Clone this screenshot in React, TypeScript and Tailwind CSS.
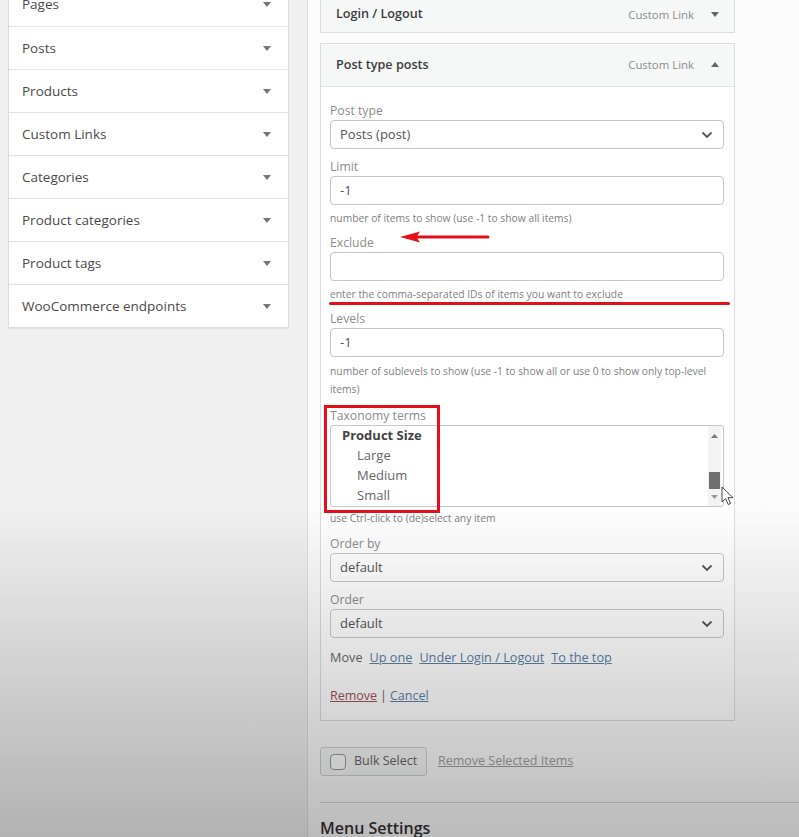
import React from "react";

const leftItems = [
  "Pages",
  "Posts",
  "Products",
  "Custom Links",
  "Categories",
  "Product categories",
  "Product tags",
  "WooCommerce endpoints",
];

function Tri({ up = false, color = "#777" }: { up?: boolean; color?: string }) {
  return (
    <svg width="8" height="5" viewBox="0 0 8 5">
      <path d={up ? "M0 5h8L4 0z" : "M0 0h8L4 5z"} fill={color} />
    </svg>
  );
}

function Chevron() {
  return (
    <svg width="12" height="8" viewBox="0 0 12 8">
      <path d="M1.5 1.5l4.5 4.5 4.5-4.5" stroke="#555" strokeWidth="1.8" fill="none" />
    </svg>
  );
}

function Label({ children, className = "" }: { children: React.ReactNode; className?: string }) {
  return <div className={`text-[12.2px] leading-[18px] text-[#8c8c8c] ${className}`}>{children}</div>;
}

function Help({ children, className = "" }: { children: React.ReactNode; className?: string }) {
  return <div className={`text-[10.3px] leading-[16px] text-[#808080] ${className}`}>{children}</div>;
}

function Select({ value }: { value: string }) {
  return (
    <div className="h-[29px] border border-[#c6c6c6] rounded-[4px] bg-white flex items-center justify-between pl-[9px] pr-[10px] text-[13px] text-[#555]">
      <span>{value}</span>
      <Chevron />
    </div>
  );
}

function Input({ value }: { value: string }) {
  return (
    <div className="h-[29px] border border-[#c6c6c6] rounded-[4px] bg-white flex items-center pl-[9px] text-[13px] text-[#555]">
      {value}
    </div>
  );
}

export default function App() {
  return (
    <div className="relative w-[799px] h-[837px] overflow-hidden bg-[#f0f0f1] flex font-['Open_Sans','Noto_Sans',sans-serif] text-[#444]">
      {/* Left column */}
      <div className="w-[307px] shrink-0 pl-2">
        <div className="mt-[-18px] w-[281px] bg-white border border-[#dcdcde] shadow-[0_1px_1px_rgba(0,0,0,0.06)]">
          {leftItems.map((t, i) => (
            <div
              key={t}
              className={`h-[43px] flex items-center justify-between pl-[13px] pr-[17px] text-[13.5px] text-[#4a4a4a] ${
                i > 0 ? "border-t border-[#e4e4e4]" : ""
              }`}
            >
              <span>{t}</span>
              <Tri />
            </div>
          ))}
        </div>
      </div>

      {/* Right column */}
      <div className="flex-1 border-l border-[#dedede] bg-[#fcfcfc] pl-3">
        <div className="mt-[-4px] w-[415px] h-[37px] bg-[#f6f7f7] border border-[#dcdcde] flex items-center justify-between pl-[15px] pr-[15px]">
          <span className="text-[12.6px] font-semibold text-[#3c3c3c]">Login / Logout</span>
          <div className="flex items-center gap-[17px]">
            <span className="text-[11.4px] text-[#8c8c8c]">Custom Link</span>
            <Tri color="#666" />
          </div>
        </div>

        <div className="mt-[10px] w-[415px] border border-[#dcdcde] bg-white">
          <div className="h-[43px] bg-[#f6f7f7] border-b border-[#e2e2e2] flex items-center justify-between pl-[15px] pr-[15px]">
            <span className="text-[12.6px] font-semibold text-[#3c3c3c]">Post type posts</span>
            <div className="flex items-center gap-[17px]">
              <span className="text-[11.4px] text-[#8c8c8c]">Custom Link</span>
              <Tri up color="#666" />
            </div>
          </div>
          <div className="pt-[15px] pl-[9px] pr-[10px] pb-[14px] flex flex-col">
            <Label>Post type</Label>
            <Select value="Posts (post)" />
            <Label className="mt-[9px]">Limit</Label>
            <Input value="-1" />
            <Help className="mt-[5px]">number of items to show (use -1 to show all items)</Help>
            <Label className="mt-[8px]">Exclude</Label>
            <Input value="" />
            <Help className="mt-[5px]">enter the comma-separated IDs of items you want to exclude</Help>
            <Label className="mt-[8px]">Levels</Label>
            <Input value="-1" />
            <Help className="mt-[5px] leading-[18px]">
              number of sublevels to show (use -1 to show all or use 0 to show only top-level
              <br />
              items)
            </Help>
            <Label className="mt-[9px]">Taxonomy terms</Label>
            <div className="h-[82px] border border-[#c6c6c6] rounded-[3px] bg-white flex overflow-hidden">
              <div className="flex-1 pl-[11px] mt-[-1px] text-[13px] leading-[20px] text-[#666]">
                <div className="font-bold text-[#444]">Product Size</div>
                <div className="pl-[15px]">Large</div>
                <div className="pl-[15px]">Medium</div>
                <div className="pl-[15px]">Small</div>
              </div>
              <div className="w-[13px] mr-[2px] bg-[#f3f3f3] flex flex-col items-center pt-[8px] pb-[7px]">
                <svg width="7" height="4" viewBox="0 0 7 4">
                  <path d="M0 4h7L3.5 0z" fill="#777" />
                </svg>
                <div className="flex-1" />
                <div className="w-[11px] h-[17px] bg-[#6f6f6f]" />
                <div className="h-[6px]" />
                <svg width="7" height="4" viewBox="0 0 7 4">
                  <path d="M0 0h7L3.5 4z" fill="#999" />
                </svg>
              </div>
            </div>
            <Help className="mt-[3px]">use Ctrl-click to (de)select any item</Help>
            <Label className="mt-[9px]">Order by</Label>
            <Select value="default" />
            <Label className="mt-[9px]">Order</Label>
            <Select value="default" />
            <div className="mt-[9px] leading-[20px] text-[12.7px] text-[#666] flex gap-[7px]">
              <span>Move</span>
              <span className="underline text-[#5b7fa6]">Up one</span>
              <span className="underline text-[#5b7fa6]">Under Login / Logout</span>
              <span className="underline text-[#5b7fa6]">To the top</span>
            </div>
            <div className="mt-[19px] leading-[20px] text-[12.5px] text-[#666]">
              <span className="underline text-[#a3525a]">Remove</span>
              <span className="mx-[3px]">|</span>
              <span className="underline text-[#5b7fa6]">Cancel</span>
            </div>
          </div>
        </div>

        <div className="mt-[26px] flex items-center gap-[11px]">
          <div className="w-[107px] h-[29px] border border-[#d0d0d0] rounded-[3px] bg-[#f6f7f7] flex items-center pl-[9px] gap-[8px]">
            <div className="w-[16px] h-[16px] border border-[#999] rounded-[4px] bg-white" />
            <span className="text-[12.5px] text-[#666]">Bulk Select</span>
          </div>
          <span className="text-[12.5px] text-[#a0a0a0] underline">Remove Selected Items</span>
        </div>

        <div className="mt-[26px] border-t border-[#d6d6d6]" />
        <div className="mt-[13px] text-[16px] leading-[24px] font-semibold text-[#333]">Menu Settings</div>
      </div>

      {/* Annotations */}
      <div className="absolute left-[329px] top-[302px] w-[401px] h-[3px] rounded-full bg-[#e3101b]" />
      <div className="absolute left-[324px] top-[405px] w-[116px] h-[108px] border-[3px] border-[#e3101b]" />
      <svg className="absolute left-[398px] top-[229px]" width="92" height="16" viewBox="0 0 92 16">
        <polygon points="2,8 22,2.5 18.5,8 22,13.5" fill="#e3101b" />
        <line x1="18" y1="8" x2="90" y2="8" stroke="#e3101b" strokeWidth="3" strokeLinecap="round" />
      </svg>
      {/* mouse cursor */}
      <svg className="absolute left-[721px] top-[486px]" width="13" height="20" viewBox="0 0 13 20">
        <path d="M1 1v15l3.6-3.4 2.6 5.9 2.3-1-2.5-5.8H12z" fill="#fff" stroke="#444" strokeWidth="1" strokeLinejoin="round" />
      </svg>

      {/* video vignette */}
      <div className="absolute inset-0 pointer-events-none bg-[linear-gradient(to_bottom,rgba(0,0,0,0)_60%,rgba(0,0,0,0.26))]" />
    </div>
  );
}
